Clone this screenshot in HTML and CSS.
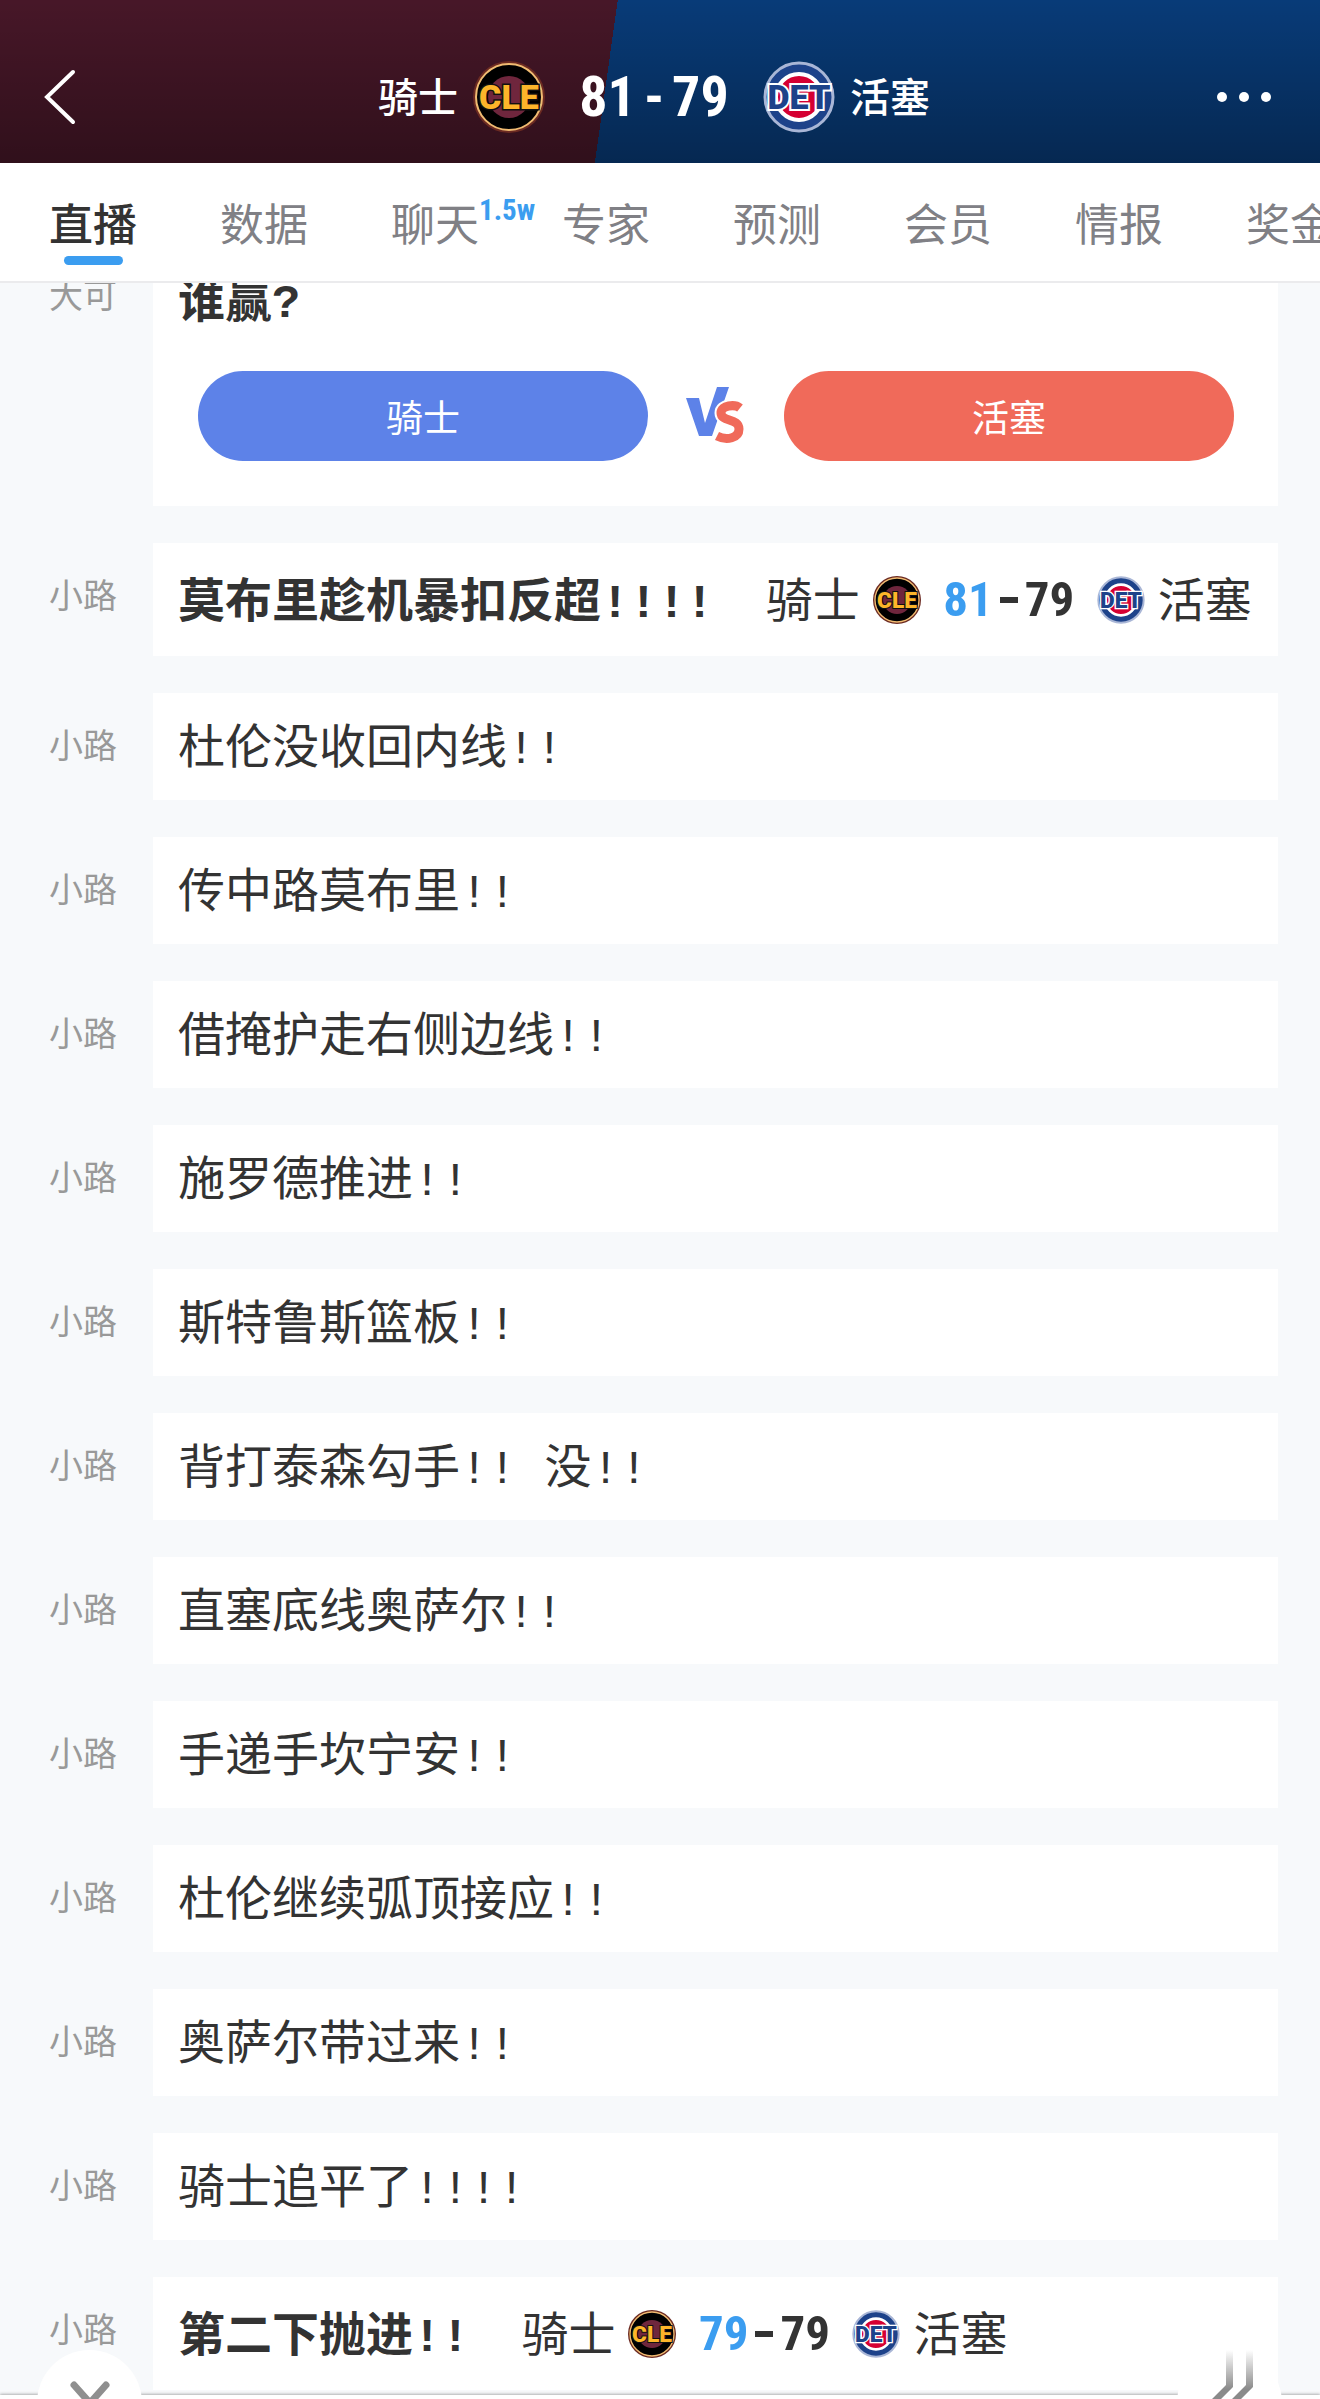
FILE: index.html
```
<!DOCTYPE html>
<html lang="zh-CN">
<head>
  <meta charset="UTF-8" />
  <meta name="viewport" content="width=device-width, initial-scale=1.0" />
  <title>骑士 81 - 79 活塞</title>
  <link rel="stylesheet" href="styles.css">
</head>
<body>
  <!-- team logos, reused in the header and the feed -->
  <svg class="sprite" aria-hidden="true">
    <symbol id="cle" viewBox="0 0 72 72">
      <circle cx="36" cy="36" r="36" fill="#6b2a22"/>
      <circle cx="36" cy="36" r="33" fill="#000" stroke="#f0bb72" stroke-width="2"/>
      <circle cx="36" cy="36" r="21" fill="#6f263d"/>
      <text x="36" y="48" text-anchor="middle" class="logo-text" fill="#fdb52a" stroke="#111" stroke-width="3" paint-order="stroke">CLE</text>
    </symbol>
    <symbol id="det" viewBox="0 0 72 72">
      <circle cx="36" cy="36" r="34" fill="#1d428a" stroke="#a9b6d6" stroke-width="3"/>
      <circle cx="36" cy="36" r="23" fill="#d50032" stroke="#fff" stroke-width="4"/>
      <text x="36" y="48" text-anchor="middle" class="logo-text" fill="#1d428a" stroke="#fff" stroke-width="4" paint-order="stroke">DET</text>
    </symbol>
  </svg>

  <div class="app">
    <header class="topbar">
      <button class="icon-btn" aria-label="返回">
        <svg width="48" height="56" viewBox="0 0 48 56"><path d="M29 3L3 28l26 25" fill="none" stroke="#fff" stroke-width="4" stroke-linecap="round"/></svg>
      </button>
      <div class="match">
        <span class="team">骑士</span>
        <svg class="logo"><use href="#cle"/></svg>
        <span class="total"><span>81</span><span>-</span><span>79</span></span>
        <svg class="logo"><use href="#det"/></svg>
        <span class="team">活塞</span>
      </div>
      <button class="icon-btn" aria-label="更多">
        <svg width="56" height="12" viewBox="0 0 56 12" fill="#fff"><circle cx="6" cy="6" r="5"/><circle cx="28" cy="6" r="5"/><circle cx="50" cy="6" r="5"/></svg>
      </button>
    </header>

    <nav class="tabs">
      <a href="#" class="active">直播</a>
      <a href="#">数据</a>
      <a href="#">聊天<span class="count">1.5w</span></a>
      <a href="#">专家</a>
      <a href="#">预测</a>
      <a href="#">会员</a>
      <a href="#">情报</a>
      <a href="#">奖金</a>
    </nav>

    <main class="feed">
      <div class="list">
        <div class="row">
          <span class="name">大可</span>
          <div class="card poll">
            <b>谁赢?</b>
            <div class="vote">
              <button class="home">骑士</button>
              <svg width="60" height="60" viewBox="0 0 60 60" aria-label="VS">
                <path d="M0 12h13l6 25L31 1h12L26 50H13z" fill="#5d82e8"/>
                <path d="M54 22c-5-4-19-3-19 5 0 9 18 5 18 16 0 9-12 12-22 7" fill="none" stroke="#fff" stroke-width="13"/>
                <path d="M54 22c-5-4-19-3-19 5 0 9 18 5 18 16 0 9-12 12-22 7" fill="none" stroke="#f06a5a" stroke-width="9"/>
              </svg>
              <button class="away">活塞</button>
            </div>
          </div>
        </div>
        <div class="row">
          <span class="name">小路</span>
          <div class="card goal">
            <b>莫布里趁机暴扣反超!!!!</b>
            <div class="score">
              <span class="team">骑士</span>
              <svg class="logo"><use href="#cle"/></svg>
              <span class="points"><em>81</em><i></i>79</span>
              <svg class="logo"><use href="#det"/></svg>
              <span class="team">活塞</span>
            </div>
          </div>
        </div>
        <div class="row"><span class="name">小路</span><p class="card">杜伦没收回内线!!</p></div>
        <div class="row"><span class="name">小路</span><p class="card">传中路莫布里!!</p></div>
        <div class="row"><span class="name">小路</span><p class="card">借掩护走右侧边线!!</p></div>
        <div class="row"><span class="name">小路</span><p class="card">施罗德推进!!</p></div>
        <div class="row"><span class="name">小路</span><p class="card">斯特鲁斯篮板!!</p></div>
        <div class="row"><span class="name">小路</span><p class="card">背打泰森勾手!! 没!!</p></div>
        <div class="row"><span class="name">小路</span><p class="card">直塞底线奥萨尔!!</p></div>
        <div class="row"><span class="name">小路</span><p class="card">手递手坎宁安!!</p></div>
        <div class="row"><span class="name">小路</span><p class="card">杜伦继续弧顶接应!!</p></div>
        <div class="row"><span class="name">小路</span><p class="card">奥萨尔带过来!!</p></div>
        <div class="row"><span class="name">小路</span><p class="card">骑士追平了!!!!</p></div>
        <div class="row">
          <span class="name">小路</span>
          <div class="card goal">
            <b>第二下抛进!!</b>
            <div class="score">
              <span class="team">骑士</span>
              <svg class="logo"><use href="#cle"/></svg>
              <span class="points"><em>79</em><i></i>79</span>
              <svg class="logo"><use href="#det"/></svg>
              <span class="team">活塞</span>
            </div>
          </div>
        </div>
      </div>
    </main>

    <footer class="bottombar">
      <button class="float collapse" aria-label="收起">
        <svg width="40" height="28" viewBox="0 0 40 28"><path d="M4 4l16 18L36 4" fill="none" stroke="#8f8f8f" stroke-width="7" stroke-linecap="round"/></svg>
      </button>
      <button class="float gift" aria-label="礼物">
        <svg width="104" height="56" viewBox="0 0 104 56">
          <defs>
            <linearGradient id="fade" x1="0" y1="0" x2="0" y2="1">
              <stop offset="0" stop-color="#8a8a8a" stop-opacity="0"/>
              <stop offset="0.7" stop-color="#8a8a8a"/>
            </linearGradient>
          </defs>
          <path d="M48 0h7v37L36 56h-9l21-21zM68 0h7v37L56 56h-9l21-21z" fill="url(#fade)"/>
        </svg>
      </button>
    </footer>
  </div>
</body>
</html>
```
FILE: styles.css
```
* {
  box-sizing: border-box;
}

body {
  margin: 0;
  font-family: "Noto Sans CJK SC", sans-serif;
  color: #333;
  background: #f7f9fb;
}

button {
  border: 0;
  padding: 0;
  background: none;
  font: inherit;
  cursor: pointer;
}

svg {
  display: block;
  flex: none;
}

.sprite {
  display: none;
}

.logo-text {
  font: 900 34px Roboto, sans-serif;
}

.app {
  display: flex;
  flex-direction: column;
  height: 100vh;
  overflow: hidden;
}

/* header */
.topbar {
  position: relative;
  z-index: 1;
  flex: none;
  display: flex;
  align-items: center;
  justify-content: space-between;
  height: 163px;
  padding: 31px 48px 0 44px;
  color: #fff;
  background:
    linear-gradient(rgba(0, 0, 0, 0), rgba(0, 0, 0, 0.32)),
    linear-gradient(98deg, #471728 46%, #083b78 46%);
}

.icon-btn {
  display: flex;
}

.match {
  display: flex;
  align-items: center;
  gap: 15px;
  font-size: 40px;
  font-weight: 500;
}

.match .team {
  padding-bottom: 4px;
}

.match .logo {
  width: 72px;
  height: 72px;
}

.total {
  display: flex;
  justify-content: center;
  gap: 8px;
  width: 188px;
  font: bold 56px/72px "Roboto Condensed", "Liberation Sans Narrow", sans-serif;
}

/* tabs */
.tabs {
  position: relative;
  z-index: 1;
  flex: none;
  display: flex;
  gap: 83px;
  height: 120px;
  padding: 0 49px;
  overflow: hidden;
  background: #fff;
  border-bottom: 2px solid #ebebed;
}

.tabs a {
  position: relative;
  flex: none;
  font-size: 44px;
  line-height: 118px;
  color: #808085;
  text-decoration: none;
}

.tabs .active {
  color: #333;
  font-weight: 500;
}

.tabs .active::after {
  content: '';
  position: absolute;
  left: 15px;
  bottom: 16px;
  width: 59px;
  height: 9px;
  border-radius: 5px;
  background: #3b9df0;
}

.count {
  position: absolute;
  left: 88px;
  top: 29px;
  font: bold 29px/36px "Roboto Condensed", "Liberation Sans Narrow", sans-serif;
  color: #3b9df0;
}

/* live feed */
.feed {
  flex: 1;
  min-height: 0;
}

.list {
  display: flex;
  flex-direction: column;
  gap: 37px;
  margin-top: -40px;
  padding: 0 42px 0 49px;
}

.row {
  display: flex;
}

.name {
  flex: none;
  width: 104px;
  font-size: 34px;
  line-height: 102px;
  color: #999;
}

.card {
  flex: 1;
  margin: 0;
  padding: 8px 25px 0;
  font-family: "Liberation Mono", "Noto Sans CJK SC", monospace;
  font-size: 47px;
  line-height: 99px;
  white-space: nowrap;
  background: #fff;
}

.poll {
  padding-top: 12px;
}

.goal {
  display: flex;
  gap: 52px;
  padding-top: 0;
  line-height: 103px;
}

.goal b,
.score .team {
  padding-top: 10px;
}

.score {
  display: flex;
  align-items: center;
  gap: 13px;
}

.score .logo {
  width: 48px;
  height: 48px;
}

.points {
  display: flex;
  align-items: center;
  justify-content: center;
  width: 150px;
  font-family: "Roboto Condensed", "Liberation Sans Narrow", sans-serif;
  font-size: 49px;
  font-weight: bold;
}

.points em {
  font-style: normal;
  color: #3b9df0;
}

.points i {
  width: 18px;
  height: 6px;
  margin: 0 7px;
  background: #333;
}

.vote {
  display: flex;
  align-items: center;
  justify-content: space-between;
  gap: 38px;
  padding: 17px 19px 45px 20px;
}

.vote button {
  flex: 1;
  height: 90px;
  border-radius: 45px;
  font-family: "Noto Sans CJK SC", sans-serif;
  font-size: 37px;
  line-height: 88px;
  color: #fff;
}

.vote .home {
  background: #5d82e8;
}

.vote .away {
  background: #f06a5a;
}

/* bottom bar, the round buttons stick out over the feed */
.bottombar {
  position: relative;
  z-index: 1;
  flex: none;
  height: 4px;
  background: #fff;
  box-shadow: 0 -1px 3px rgba(0, 0, 0, 0.3);
}

.float {
  position: absolute;
  top: -45px;
  display: flex;
  justify-content: center;
  width: 105px;
  height: 105px;
  border-radius: 50%;
  background: #fff;
}

.collapse {
  left: 37px;
  padding-top: 31px;
}

.gift {
  right: 38px;
}
```
